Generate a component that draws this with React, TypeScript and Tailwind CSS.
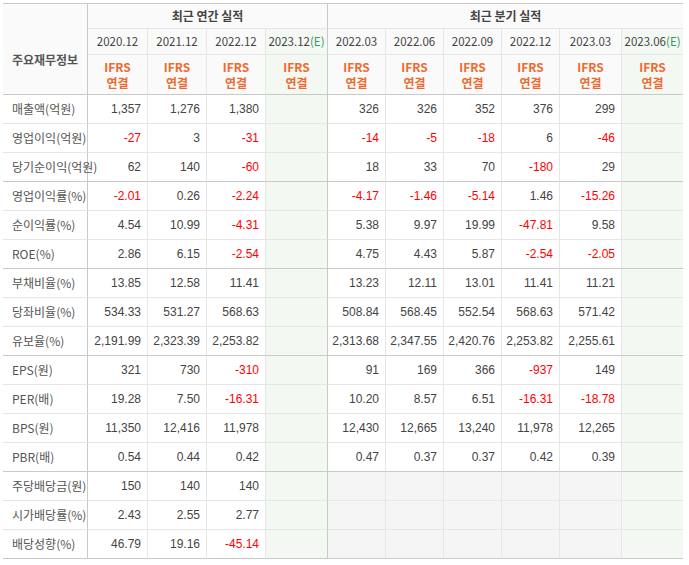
import React from 'react';

type Row = { label: string; annual: string[]; quarter: string[]; group?: boolean };

const rows: Row[] = [
  { label: '매출액(억원)', annual: ['1,357', '1,276', '1,380'], quarter: ['326', '326', '352', '376', '299'] },
  { label: '영업이익(억원)', annual: ['-27', '3', '-31'], quarter: ['-14', '-5', '-18', '6', '-46'] },
  { label: '당기순이익(억원)', annual: ['62', '140', '-60'], quarter: ['18', '33', '70', '-180', '29'], group: true },
  { label: '영업이익률(%)', annual: ['-2.01', '0.26', '-2.24'], quarter: ['-4.17', '-1.46', '-5.14', '1.46', '-15.26'] },
  { label: '순이익률(%)', annual: ['4.54', '10.99', '-4.31'], quarter: ['5.38', '9.97', '19.99', '-47.81', '9.58'] },
  { label: 'ROE(%)', annual: ['2.86', '6.15', '-2.54'], quarter: ['4.75', '4.43', '5.87', '-2.54', '-2.05'], group: true },
  { label: '부채비율(%)', annual: ['13.85', '12.58', '11.41'], quarter: ['13.23', '12.11', '13.01', '11.41', '11.21'] },
  { label: '당좌비율(%)', annual: ['534.33', '531.27', '568.63'], quarter: ['508.84', '568.45', '552.54', '568.63', '571.42'] },
  { label: '유보율(%)', annual: ['2,191.99', '2,323.39', '2,253.82'], quarter: ['2,313.68', '2,347.55', '2,420.76', '2,253.82', '2,255.61'], group: true },
  { label: 'EPS(원)', annual: ['321', '730', '-310'], quarter: ['91', '169', '366', '-937', '149'] },
  { label: 'PER(배)', annual: ['19.28', '7.50', '-16.31'], quarter: ['10.20', '8.57', '6.51', '-16.31', '-18.78'] },
  { label: 'BPS(원)', annual: ['11,350', '12,416', '11,978'], quarter: ['12,430', '12,665', '13,240', '11,978', '12,265'] },
  { label: 'PBR(배)', annual: ['0.54', '0.44', '0.42'], quarter: ['0.47', '0.37', '0.37', '0.42', '0.39'], group: true },
  { label: '주당배당금(원)', annual: ['150', '140', '140'], quarter: [] },
  { label: '시가배당률(%)', annual: ['2.43', '2.55', '2.77'], quarter: [] },
  { label: '배당성향(%)', annual: ['46.79', '19.16', '-45.14'], quarter: [], group: true },
];

const annualCols = ['2020.12', '2021.12', '2022.12'];
const quarterCols = ['2022.03', '2022.06', '2022.09', '2022.12', '2023.03'];

const kr = { fontFamily: '"Noto Sans CJK KR", "Liberation Sans", sans-serif' };
const num = { fontFamily: '"Liberation Sans", "Noto Sans CJK KR", sans-serif' };

function Ifrs({ est, last }: { est?: boolean; last?: string }) {
  return (
    <th
      className={`h-[40px] border-b border-b-[#c9c9c9] ${last ?? 'border-r border-r-[#e6e6e6]'} ${est ? 'bg-[#f3f8f3]' : 'bg-[#fafafa]'} text-[12px] font-bold leading-[16px] text-[#ee6a2f]`}
      style={kr}
    >
      IFRS
      <br />
      연결
    </th>
  );
}

export default function App() {
  return (
    <div className="bg-white w-[689px] h-[565px] pt-[3px] pl-[3px]">
      <table className="table-fixed border-separate border-spacing-0 w-[680px] text-[#444]">
        <colgroup>
          <col className="w-[85px]" />
          <col className="w-[60px]" />
          <col className="w-[59px]" />
          <col className="w-[59px]" />
          <col className="w-[62px]" />
          <col className="w-[58px]" />
          <col className="w-[58px]" />
          <col className="w-[58px]" />
          <col className="w-[58px]" />
          <col className="w-[62px]" />
          <col className="w-[61px]" />
        </colgroup>
        <thead>
          <tr>
            <th
              rowSpan={3}
              className="border-t border-t-[#c9c9c9] border-b border-b-[#c9c9c9] border-r border-r-[#c9c9c9] bg-[#fafafa] text-[12px] font-bold text-[#555] pt-[22px]"
              style={kr}
            >
              주요재무정보
            </th>
            <th
              colSpan={4}
              className="h-[26px] border-t border-t-[#c9c9c9] border-b border-b-[#e6e6e6] border-r border-r-[#c9c9c9] bg-[#fafafa] text-[12px] font-bold text-[#444]"
              style={kr}
            >
              최근 연간 실적
            </th>
            <th
              colSpan={6}
              className="h-[26px] border-t border-t-[#c9c9c9] border-b border-b-[#e6e6e6] bg-[#fafafa] text-[12px] font-bold text-[#444]"
              style={kr}
            >
              최근 분기 실적
            </th>
          </tr>
          <tr>
            {annualCols.map((c) => (
              <th key={c} className="h-[26px] border-b border-b-[#e6e6e6] border-r border-r-[#e6e6e6] bg-[#fafafa] text-[11.5px] font-normal text-[#444]" style={kr}>
                {c}
              </th>
            ))}
            <th className="h-[26px] border-b border-b-[#e6e6e6] border-r border-r-[#c9c9c9] bg-[#f3f8f3] text-[11.5px] font-normal text-[#444] whitespace-nowrap" style={kr}>
              2023.12<span className="text-[#3b9a5a]">(E)</span>
            </th>
            {quarterCols.map((c) => (
              <th key={c} className="h-[26px] border-b border-b-[#e6e6e6] border-r border-r-[#e6e6e6] bg-[#fafafa] text-[11.5px] font-normal text-[#444]" style={kr}>
                {c}
              </th>
            ))}
            <th className="h-[26px] border-b border-b-[#e6e6e6] bg-[#f3f8f3] text-[11.5px] font-normal text-[#444] whitespace-nowrap" style={kr}>
              2023.06<span className="text-[#3b9a5a]">(E)</span>
            </th>
          </tr>
          <tr>
            <Ifrs />
            <Ifrs />
            <Ifrs />
            <Ifrs est last="border-r border-r-[#c9c9c9]" />
            <Ifrs />
            <Ifrs />
            <Ifrs />
            <Ifrs />
            <Ifrs />
            <Ifrs est last="" />
          </tr>
        </thead>
        <tbody>
          {rows.map((r) => {
            const bb = r.group ? 'border-b-[#c9c9c9]' : 'border-b-[#e6e6e6]';
            const empty = r.quarter.length === 0;
            return (
              <tr key={r.label}>
                <th
                  className={`h-[29px] border-b ${bb} border-r border-r-[#c9c9c9] text-left pl-[9px] text-[12px] font-normal text-[#555] whitespace-nowrap`}
                  style={kr}
                >
                  {r.label}
                </th>
                {r.annual.map((v, i) => (
                  <td
                    key={i}
                    className={`border-b ${bb} border-r border-r-[#e6e6e6] text-right pr-[6px] text-[12px] ${v.startsWith('-') ? 'text-[#ff0000]' : 'text-[#444]'}`}
                    style={num}
                  >
                    {v}
                  </td>
                ))}
                <td className={`border-b ${bb} border-r border-r-[#c9c9c9] bg-[#f3f8f3]`} />
                {(empty ? ['', '', '', '', ''] : r.quarter).map((v, i) => (
                  <td
                    key={i}
                    className={`border-b ${bb} border-r border-r-[#e6e6e6] text-right pr-[6px] text-[12px] ${empty ? 'bg-[#f5f5f5]' : ''} ${v.startsWith('-') ? 'text-[#ff0000]' : 'text-[#444]'}`}
                    style={num}
                  >
                    {v}
                  </td>
                ))}
                <td className={`border-b ${bb} bg-[#f3f8f3]`} />
              </tr>
            );
          })}
        </tbody>
      </table>
    </div>
  );
}
